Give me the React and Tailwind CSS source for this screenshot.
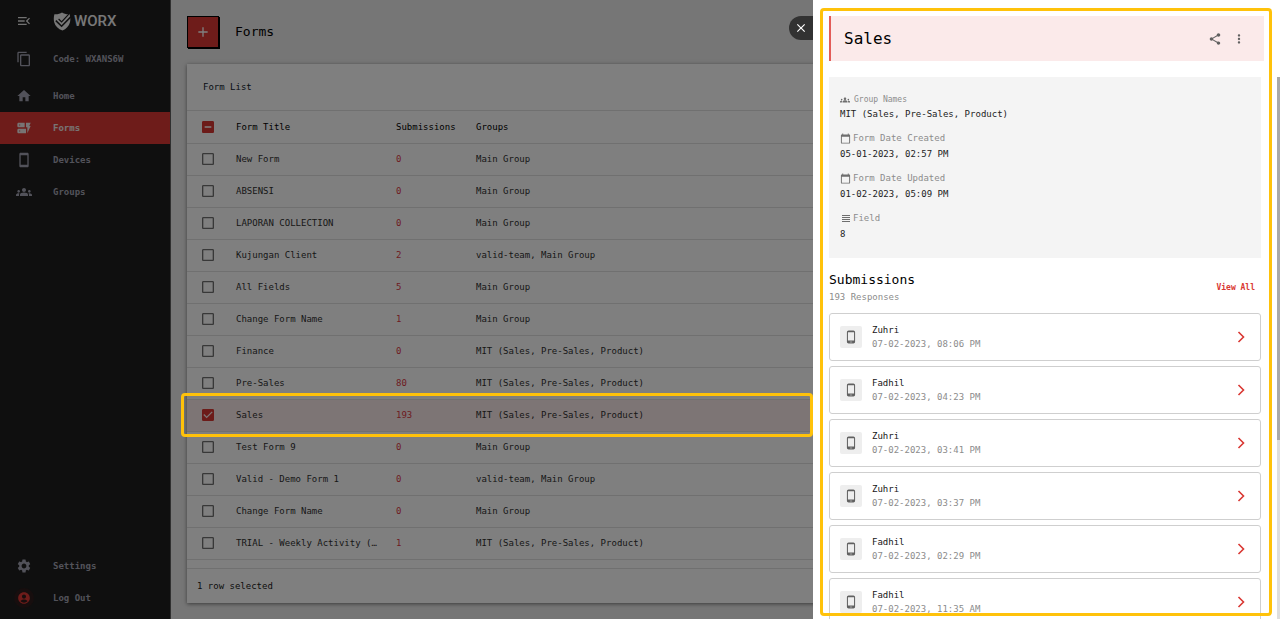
import React from "react";
import {
  MdMenuOpen, MdContentCopy, MdHome, MdDynamicForm, MdStayCurrentPortrait, MdGroups,
  MdSettings, MdAccountCircle, MdShare, MdMoreVert, MdCalendarToday,
  MdPhoneAndroid, MdAdd, MdClose, MdCheckBox, MdCheckBoxOutlineBlank,
  MdIndeterminateCheckBox,
} from "react-icons/md";

const MIT = "MIT (Sales, Pre-Sales, Product)";

const forms = [
  ["New Form", 0, "Main Group"],
  ["ABSENSI", 0, "Main Group"],
  ["LAPORAN COLLECTION", 0, "Main Group"],
  ["Kujungan Client", 2, "valid-team, Main Group"],
  ["All Fields", 5, "Main Group"],
  ["Change Form Name", 1, "Main Group"],
  ["Finance", 0, MIT],
  ["Pre-Sales", 80, MIT],
  ["Sales", 193, MIT],
  ["Test Form 9", 0, "Main Group"],
  ["Valid - Demo Form 1", 0, "valid-team, Main Group"],
  ["Change Form Name", 0, "Main Group"],
  ["TRIAL - Weekly Activity (…", 1, MIT],
];

const submissions = [
  ["Zuhri", "07-02-2023, 08:06 PM"],
  ["Fadhil", "07-02-2023, 04:23 PM"],
  ["Zuhri", "07-02-2023, 03:41 PM"],
  ["Zuhri", "07-02-2023, 03:37 PM"],
  ["Fadhil", "07-02-2023, 02:29 PM"],
  ["Fadhil", "07-02-2023, 11:35 AM"],
];

function NavItem({ icon: Icon, label, active }) {
  return (
    <a
      href="#"
      className={
        "flex h-8 items-center gap-[21px] pl-4 font-bold " +
        (active ? "bg-[#dc3934] text-[#f0e8e8]" : "text-[#a5a5b4]")
      }
    >
      <Icon className="size-4" />
      {label}
    </a>
  );
}

function Logo() {
  return (
    <div className="flex items-center gap-[3px] text-[#f0f0f0]">
      <svg viewBox="0 0 18 19" className="h-[19px] w-[18px]" aria-hidden="true">
        <path
          fill="currentColor"
          d="M9 0.500C11 2 13.800 2.400 16.600 2.200c.8 2.500 1 5.400.4 8C16 14.200 13 17 9.500 18.600 5.200 17 2.200 14.200 1.200 10.200.6 7.600.7 4.700 1.400 2.200 4.200 2.400 7 2 9 .5Z"
        />
        <path fill="none" stroke="#1e1e1e" strokeWidth="1.500" d="M2.800 8.600 8.600 14.200 18 4.600" />
        <path fill="none" stroke="#1e1e1e" strokeWidth="1.200" d="M5.600 7 8.600 9.900 15.800 2.200" />
      </svg>
      <span className="font-[Roboto] text-[15px] leading-5 font-medium">WORX</span>
    </div>
  );
}

function LinesIcon({ className }) {
  return (
    <svg viewBox="0 0 11 11" className={className} aria-hidden="true">
      <path d="M2 2.500h8M2 4.500h8M2 6.500h8M2 8.500h8" stroke="currentColor" strokeWidth="1" />
    </svg>
  );
}

function CheckBox({ label, checked, indeterminate }) {
  const Icon = indeterminate
    ? MdIndeterminateCheckBox
    : checked
      ? MdCheckBox
      : MdCheckBoxOutlineBlank;
  return (
    <label className="mx-auto grid size-4 place-items-center">
      <input
        type="checkbox"
        aria-label={label}
        defaultChecked={checked}
        className="size-4 appearance-none [grid-area:1/1]"
      />
      <Icon
        className={
          "pointer-events-none size-4 [grid-area:1/1] " +
          (checked || indeterminate ? "text-[#d93732]" : "text-[#707070]")
        }
      />
    </label>
  );
}

function Detail({ icon: Icon, label, value, small }) {
  return (
    <div>
      <dt
        className={
          "flex items-center text-[#8c8c8c] " +
          (small ? "h-3 gap-1 text-[8px]" : "h-4 gap-[2px]")
        }
      >
        <Icon className={"text-[#6e6e6e] " + (small ? "size-[10px]" : "size-[11px]")} />
        {label}
      </dt>
      <dd className="leading-4 text-[#222]">{value}</dd>
    </div>
  );
}

export default function App() {
  return (
    <div className="relative flex h-screen overflow-hidden bg-[#ececec] font-['DejaVu_Sans_Mono','Liberation_Mono',monospace] text-[9px] leading-4">
      <aside className="flex w-[171px] shrink-0 flex-col border-r border-[#606060] bg-[#1e1e1e] pb-[5px]">
        <div className="flex h-[42px] items-center gap-[21px] pl-4">
          <button type="button" aria-label="Collapse menu" className="text-[#e4e4e4]">
            <MdMenuOpen className="size-4" />
          </button>
          <Logo />
        </div>
        <div className="mb-1 flex h-[34px] items-center gap-[21px] pl-4 font-bold text-[#a5a5b4]">
          <MdContentCopy className="size-4" />
          Code: WXANS6W
        </div>
        <nav className="flex flex-1 flex-col">
          <NavItem icon={MdHome} label="Home" />
          <NavItem icon={MdDynamicForm} label="Forms" active />
          <NavItem icon={MdStayCurrentPortrait} label="Devices" />
          <NavItem icon={MdGroups} label="Groups" />
          <div className="mt-auto">
            <NavItem icon={MdSettings} label="Settings" />
            <a href="#" className="flex h-8 items-center gap-[19px] pl-[14px] font-bold text-[#a5a5b4]">
              <span className="grid size-5 place-items-center rounded-full bg-[#2e1c1c]">
                <MdAccountCircle className="size-[14px] text-[#dc3934]" />
              </span>
              Log Out
            </a>
          </div>
        </nav>
      </aside>

      <main className="flex min-w-0 flex-1 flex-col px-4 py-4">
        <header className="flex h-8 items-center gap-4">
          <button
            type="button"
            aria-label="Add form"
            className="grid size-8 place-items-center border border-black bg-[#dc3934] text-white shadow-[1px_1px_0_0_#000]"
          >
            <MdAdd className="size-4" />
          </button>
          <h1 className="text-[13px] font-medium text-black">Forms</h1>
        </header>

        <section className="mt-4 bg-white shadow-[0_1px_4px_rgba(0,0,0,0.5)]">
          <h2 className="flex h-[47px] items-center border-b border-[#e0e0e0] px-4 text-[#10202c]">
            Form List
          </h2>
          <table className="w-full table-fixed border-collapse text-left">
            <colgroup>
              <col className="w-[41px]" />
              <col className="w-40" />
              <col className="w-20" />
              <col />
            </colgroup>
            <thead>
              <tr className="h-8 border-b border-[#e0e0e0] text-black">
                <th><CheckBox label="Select all forms" indeterminate /></th>
                <th className="px-2 font-normal">Form Title</th>
                <th className="px-2 font-normal">Submissions</th>
                <th className="px-2 font-normal">Groups</th>
              </tr>
            </thead>
            <tbody>
              {forms.map(([title, count, groups], i) => (
                <tr
                  key={i}
                  className={
                    "h-8 border-b border-[#e0e0e0] text-[#303030] " +
                    (title === "Sales" ? "bg-[#fbeaea]" : "")
                  }
                >
                  <td><CheckBox label={"Select " + title} checked={title === "Sales"} /></td>
                  <td className="px-2 whitespace-nowrap">{title}</td>
                  <td className="px-2 text-[#dc3945]">{count}</td>
                  <td className="px-2">{groups}</td>
                </tr>
              ))}
            </tbody>
          </table>
          <p className="mt-2 flex h-[35px] items-center border-t border-[#e0e0e0] px-[10px] text-[#202020]">
            1 row selected
          </p>
        </section>
      </main>

      <div className="absolute inset-0 bg-black/50" />
      <div className="absolute top-[393px] right-[467px] left-[181px] h-[44px] rounded-[4px] border-3 border-[#ffc20a]" />

      <div className="absolute inset-y-0 right-0 w-[467px] bg-white">
        <button
          type="button"
          aria-label="Close details"
          className="absolute top-4 right-full grid h-6 w-6 place-items-center rounded-l-full bg-[#323232] text-white"
        >
          <MdClose className="size-[14px]" />
        </button>

        <div className="flex h-full flex-col overflow-hidden px-4 pt-4">
          <header className="flex h-[45px] shrink-0 items-center border-l-2 border-[#e35b57] bg-[#fbeaea] pr-[18px] pl-[13px]">
            <h2 className="flex-1 text-[16px] font-medium text-black">Sales</h2>
            <div className="flex gap-[10px] text-[#606060]">
              <button type="button" aria-label="Share"><MdShare className="size-[14px]" /></button>
              <button type="button" aria-label="More options"><MdMoreVert className="size-[14px]" /></button>
            </div>
          </header>

          <div className="mt-4 mr-[3px]">
            <dl className="flex flex-col gap-2 bg-[#f4f4f4] px-[11px] pt-[17px] pb-4">
              <Detail icon={MdGroups} label="Group Names" value={MIT} small />
              <Detail icon={MdCalendarToday} label="Form Date Created" value="05-01-2023, 02:57 PM" />
              <Detail icon={MdCalendarToday} label="Form Date Updated" value="01-02-2023, 05:09 PM" />
              <Detail icon={LinesIcon} label="Field" value="8" />
            </dl>

            <div className="mt-[13px] flex items-center justify-between pr-[6px]">
              <div>
                <h3 className="text-[13px] leading-[18px] text-black">Submissions</h3>
                <p className="leading-4 text-[#8c8c8c]">193 Responses</p>
              </div>
              <a href="#" className="text-[8px] font-bold text-[#d93732]">View All</a>
            </div>

            <ul className="mt-2 flex flex-col gap-[5px]">
              {submissions.map(([name, date], i) => (
                <li key={i}>
                  <a
                    href="#"
                    className="flex h-12 items-center rounded-[3px] border border-[#cfcfcf] pr-[15px] pl-[10px]"
                  >
                    <span className="grid size-[22px] place-items-center rounded-[2px] bg-[#eeeeee]">
                      <MdPhoneAndroid className="size-[14px] text-[#606060]" />
                    </span>
                    <span className="ml-[10px] flex-1 leading-[14px]">
                      <span className="block text-[#151515]">{name}</span>
                      <span className="block text-[#8c8c8c]">{date}</span>
                    </span>
                    <svg viewBox="0 0 8 12" className="h-3 w-2" fill="none" aria-hidden="true">
                      <path d="M1.500 1 6.500 6l-5 5" stroke="#d93732" strokeWidth="1.600" />
                    </svg>
                  </a>
                </li>
              ))}
            </ul>
          </div>
        </div>

        <div className="absolute top-[77px] right-0 bottom-0 w-[3px] bg-[#dedede]">
          <div className="h-[363px] bg-[#a9a9a9]" />
        </div>
        <div className="pointer-events-none absolute top-2 right-2 bottom-[3px] left-[7px] rounded-[4px] border-3 border-[#ffc20a]" />
      </div>
    </div>
  );
}
